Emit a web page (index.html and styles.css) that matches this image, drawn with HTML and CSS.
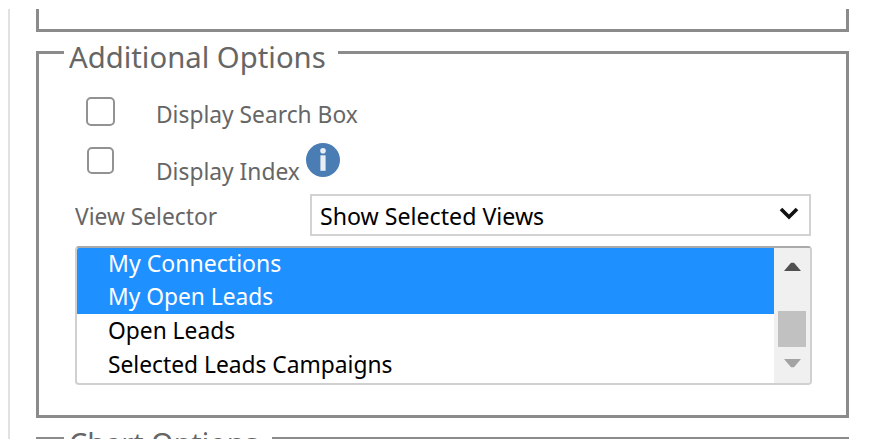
FILE: index.html
```
<!DOCTYPE html>
<html lang="en">
<head>
<meta charset="utf-8">
<title>Additional Options</title>
<link rel="stylesheet" href="styles.css">
</head>
<body>
<main class="panel">
  <section class="previous"></section>
  <fieldset class="group">
    <legend><span class="fit title">Additional Options</span></legend>
    <div class="option first"><span class="check"></span><span class="fit label search">Display Search Box</span></div>
    <div class="option second"><span class="check small"></span><span class="fit label index">Display Index</span>
      <svg class="info" viewBox="0 0 34 34"><circle cx="17" cy="17" r="17" fill="#4a7db3"/><circle cx="17" cy="7.8" r="2.8" fill="#e8eef5"/><path d="M14.4 12.3h5.2v15.5h-5.2z" fill="#e8eef5"/></svg>
    </div>
    <div class="selector">
      <span class="fit label view">View Selector</span>
      <div class="select"><span class="fit shown">Show Selected Views</span>
        <svg class="chevron" viewBox="0 0 20 13"><path d="M2 2l8 8 8-8" fill="none" stroke="#111" stroke-width="3.6"/></svg>
      </div>
    </div>
    <div class="listbox">
      <div class="items">
        <div class="item selected"><span class="fit connections">My Connections</span></div>
        <div class="item selected"><span class="fit myopen">My Open Leads</span></div>
        <div class="item"><span class="fit open">Open Leads</span></div>
        <div class="item"><span class="fit campaigns">Selected Leads Campaigns</span></div>
      </div>
      <div class="scrollbar">
        <svg class="up" viewBox="0 0 17 9"><path d="M0 9L7 .7h3L17 9z" fill="#505050"/></svg>
        <div class="thumb"></div>
        <svg class="down" viewBox="0 0 17 9"><path d="M0 0h17L10 8.3H7z" fill="#a3a3a3"/></svg>
      </div>
    </div>
  </fieldset>
  <fieldset class="group next">
    <legend><span class="fit title chart">Chart Options</span></legend>
  </fieldset>
</main>
</body>
</html>
```
FILE: styles.css
```
* { box-sizing: border-box; }
body { margin: 0; width: 874px; height: 440px; overflow: hidden; background: #fff; font-family: "Noto Sans", sans-serif; font-size: 23px; color: #000; }
.panel { margin: 9px 0 0 8px; height: 430px; border-left: 2px solid #e2e2e2; padding-left: 26px; overflow: hidden; }
.previous { width: 813px; height: 23px; border: 3px solid #8b8b8b; border-top: 0; }
.group { width: 813px; height: 381px; margin: 5px 0 0; padding: 0 35px 0 36px; border: 3px solid #8b8b8b; min-width: 0; }
legend { height: 31px; width: 274px; padding: 0 0 0 5px; margin-left: -11px; line-height: 39px; }
.fit { display: inline-block; white-space: nowrap; transform-origin: 0 50%; transform: scaleX(.99); }
.title { font-size: 29px; color: #666; transform: scaleX(1.01); }
.title.chart { transform: scaleX(.995); }
.label { color: #666; }
.option { display: flex; align-items: flex-start; }
.first { height: 79px; padding: 29px 0 0 11px; }
.second { height: 47px; padding-left: 12px; }
.check { flex: none; width: 29px; height: 29px; border: 2px solid #929292; border-radius: 5px; margin-right: 41px; }
.small { width: 27px; height: 27px; margin-right: 42px; }
.search, .index { line-height: 32px; margin-top: 1px; }
.index { margin-top: 8px; width: 150px; }
.info { width: 34px; height: 34px; margin-top: -4px; flex: none; }
.selector { display: flex; height: 42px; }
.view { width: 235px; line-height: 44px; }
.select { display: flex; justify-content: space-between; align-items: center; width: 501px; height: 42px; border: 2px solid #d2d2d2; padding: 1px 10px 0 8px; }
.shown { transform: scaleX(1.007); }
.chevron { width: 20px; height: 13px; margin-top: -4px; }
.listbox { display: flex; width: 737px; height: 139px; margin-top: 10px; border: 2px solid #d0d0d0; border-top-color: #aaa; border-radius: 4px; overflow: hidden; }
.items { flex: 1; }
.item { height: 34px; line-height: 32px; padding-left: 31px; }
.selected { height: 33px; line-height: 30px; background: #1e90ff; color: #fff; }
.connections { transform: scaleX(1.003); }
.scrollbar { width: 36px; background: #f0f0f0; display: flex; flex-direction: column; align-items: center; }
.up, .down { width: 17px; height: 9px; flex: none; }
.up { margin-top: 14px; }
.thumb { width: 28px; height: 36px; margin-top: 40px; background: #c1c1c1; }
.down { margin-top: 12px; }
.next legend { width: 208px; }
```
